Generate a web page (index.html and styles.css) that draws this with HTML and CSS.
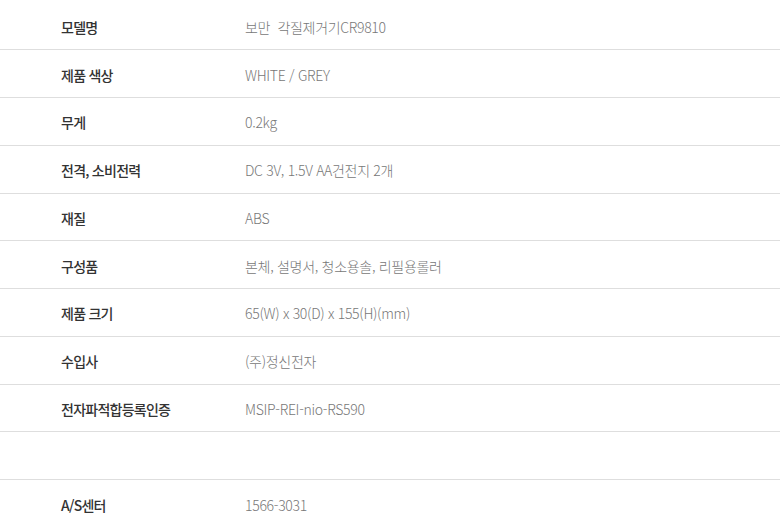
FILE: index.html
```html
<!DOCTYPE html>
<html lang="ko">
<head>
<meta charset="utf-8">
<link rel="stylesheet" href="styles.css">
</head>
<body>
<div class="spec">
  <div class="row"><div class="label">모델명</div><div class="value">보만&nbsp; 각질제거기CR9810</div></div>
  <div class="row"><div class="label">제품 색상</div><div class="value">WHITE / GREY</div></div>
  <div class="row"><div class="label">무게</div><div class="value">0.2kg</div></div>
  <div class="row"><div class="label">전격, 소비전력</div><div class="value">DC 3V, 1.5V AA건전지 2개</div></div>
  <div class="row"><div class="label">재질</div><div class="value">ABS</div></div>
  <div class="row"><div class="label">구성품</div><div class="value">본체, 설명서, 청소용솔, 리필용롤러</div></div>
  <div class="row"><div class="label">제품 크기</div><div class="value">65(W) x 30(D) x 155(H)(mm)</div></div>
  <div class="row"><div class="label">수입사</div><div class="value">(주)정신전자</div></div>
  <div class="row"><div class="label">전자파적합등록인증</div><div class="value">MSIP-REI-nio-RS590</div></div>
  <div class="row"><div class="label"></div><div class="value"></div></div>
  <div class="row last"><div class="label">A/S센터</div><div class="value">1566-3031</div></div>
</div>
</body>
</html>
```
FILE: styles.css
```css
html, body {
  margin: 0;
  padding: 0;
  background: #fff;
}
body {
  font-family: "Noto Sans CJK KR", "Noto Sans", sans-serif;
}
.spec {
  padding-top: 2.5px;
}
.row {
  display: flex;
  align-items: center;
  height: 47.78px;
  padding-top: 2px;
  box-sizing: border-box;
  border-bottom: 1px solid #dedede;
}
.row.last {
  border-bottom: none;
}
.label {
  width: 184px;
  padding-left: 61px;
  flex: none;
  font-size: 14px;
  font-weight: 500;
  color: #333;
  letter-spacing: -0.75px;
}
.value {
  font-size: 14px;
  font-weight: 300;
  color: #777;
  letter-spacing: -0.3px;
}
```
